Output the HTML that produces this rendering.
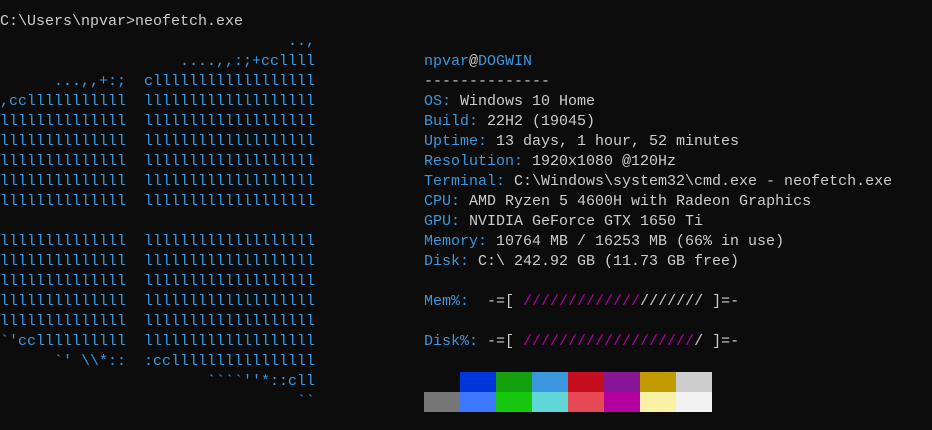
<!DOCTYPE html>
<html><head><meta charset="utf-8"><style>
html,body{margin:0;padding:0;background:#0c0c0c;width:932px;height:430px;overflow:hidden}
pre{margin:0;position:absolute;font-family:"Liberation Mono",monospace;font-size:15px;line-height:20px;color:#cccccc;white-space:pre}
.b{color:#3a96dd}.m{color:#b4009e}
.blk{position:absolute;width:36px;height:20px}
</style></head><body>
<pre style="left:0;top:12px">C:\Users\npvar>neofetch.exe</pre>
<pre class="b" style="left:0;top:32px">                                ..,
                    ....,,:;+ccllll
      ...,,+:;  cllllllllllllllllll
,cclllllllllll  lllllllllllllllllll
llllllllllllll  lllllllllllllllllll
llllllllllllll  lllllllllllllllllll
llllllllllllll  lllllllllllllllllll
llllllllllllll  lllllllllllllllllll
llllllllllllll  lllllllllllllllllll

llllllllllllll  lllllllllllllllllll
llllllllllllll  lllllllllllllllllll
llllllllllllll  lllllllllllllllllll
llllllllllllll  lllllllllllllllllll
llllllllllllll  lllllllllllllllllll
&#96;'ccllllllllll  lllllllllllllllllll
      &#96;' \\*::  :ccllllllllllllllll
                       &#96;&#96;&#96;&#96;''*::cll
                                 &#96;&#96;</pre>
<pre style="left:424px;top:52px"><span class="b">npvar</span>@<span class="b">DOGWIN</span>
--------------
<span class="b">OS:</span> Windows 10 Home
<span class="b">Build:</span> 22H2 (19045)
<span class="b">Uptime:</span> 13 days, 1 hour, 52 minutes
<span class="b">Resolution:</span> 1920x1080 @120Hz
<span class="b">Terminal:</span> C:\Windows\system32\cmd.exe - neofetch.exe
<span class="b">CPU:</span> AMD Ryzen 5 4600H with Radeon Graphics
<span class="b">GPU:</span> NVIDIA GeForce GTX 1650 Ti
<span class="b">Memory:</span> 10764 MB / 16253 MB (66% in use)
<span class="b">Disk:</span> C:\ 242.92 GB (11.73 GB free)

<span class="b">Mem%:</span>  -=[ <span class="m">/////////////</span>/////// ]=-

<span class="b">Disk%:</span> -=[ <span class="m">///////////////////</span>/ ]=-</pre>
<div class="blk" style="left:460px;top:372px;background:#0037da"></div>
<div class="blk" style="left:496px;top:372px;background:#13a10e"></div>
<div class="blk" style="left:532px;top:372px;background:#3a96dd"></div>
<div class="blk" style="left:568px;top:372px;background:#c50f1f"></div>
<div class="blk" style="left:604px;top:372px;background:#881798"></div>
<div class="blk" style="left:640px;top:372px;background:#c19c00"></div>
<div class="blk" style="left:676px;top:372px;background:#cccccc"></div>
<div class="blk" style="left:424px;top:392px;background:#767676"></div>
<div class="blk" style="left:460px;top:392px;background:#3b78ff"></div>
<div class="blk" style="left:496px;top:392px;background:#16c60c"></div>
<div class="blk" style="left:532px;top:392px;background:#61d6d6"></div>
<div class="blk" style="left:568px;top:392px;background:#e74856"></div>
<div class="blk" style="left:604px;top:392px;background:#b4009e"></div>
<div class="blk" style="left:640px;top:392px;background:#f9f1a5"></div>
<div class="blk" style="left:676px;top:392px;background:#f2f2f2"></div>
</body></html>
